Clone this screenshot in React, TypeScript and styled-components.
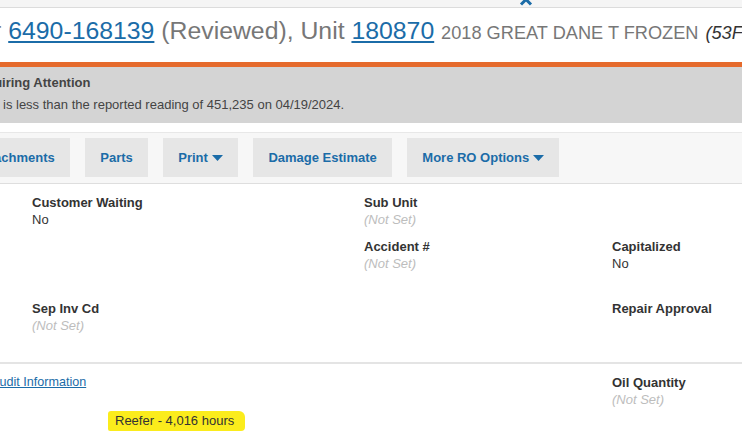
import React from "react";
import styled, { createGlobalStyle } from "styled-components";

const GlobalStyle = createGlobalStyle`
  body {
    margin: 0;
    overflow: hidden;
    background: #fff;
    font-family: "Liberation Sans", Arial, sans-serif;
    color: #333;
  }
`;

const LINK = "#1b6ca8";

const Page = styled.div`
  margin-left: -150px;
  width: 1050px;
`;

const TopStrip = styled.div`
  position: relative;
  height: 7px;
  background: #f5f5f5;
  border-bottom: 1px solid #dcdcdc;
`;

const Collapse = styled.svg`
  position: absolute;
  left: 669px;
  top: -3px;
`;

const Header = styled.h1`
  margin: 0;
  padding: 8px 0 14px 8px;
  font-size: 24.8px;
  font-weight: normal;
  line-height: 30px;
  white-space: nowrap;
  color: #777;
`;

const TitleLink = styled.a`
  color: ${LINK};
  text-decoration: underline;
`;

const Model = styled.span`
  font-size: 18.2px;
  color: #777;
`;

const Spec = styled.span`
  font-size: 18.2px;
  font-style: italic;
  color: #333;
`;

const Alert = styled.div`
  border-top: 5px solid #e56a2c;
  background: #d4d4d4;
  padding: 7px 0 10px 82px;
  font-size: 13px;
  line-height: 17px;
  color: #444;
  white-space: nowrap;
`;

const AlertTitle = styled.div`
  font-weight: bold;
  margin-bottom: 5px;
`;

const AlertMessage = styled.div`
  margin-left: 71px;
`;

const Toolbar = styled.div`
  margin-top: 9px;
  display: flex;
  gap: 15.5px;
  padding: 5px 0 6px 111px;
  background: #f7f7f7;
  border-top: 1px solid #e8e8e8;
  border-bottom: 1px solid #dedede;
`;

const ToolButton = styled.button`
  height: 39px;
  padding: 0 15px;
  border: none;
  background: #e6e6e6;
  color: ${LINK};
  font-family: inherit;
  font-size: 13px;
  font-weight: bold;
  white-space: nowrap;
  display: flex;
  align-items: center;
  gap: 4px;
`;

const Caret = styled.svg`
  margin-top: 1px;
`;

const FieldGrid = styled.div`
  display: grid;
  grid-template-columns: 332px 248px 200px;
  grid-template-rows: 44px 62px 34px;
  padding: 10px 0 28px 182px;
  border-bottom: 2px solid #e4e4e4;
`;

const FieldBox = styled.div<{ $row: number; $col: number }>`
  grid-row: ${(p) => p.$row};
  grid-column: ${(p) => p.$col};
  font-size: 13px;
  line-height: 17px;
`;

const Label = styled.div`
  font-weight: bold;
  color: #333;
`;

const Value = styled.div<{ $empty?: boolean }>`
  color: ${(p) => (p.$empty ? "#bdbdbd" : "#333")};
  font-style: ${(p) => (p.$empty ? "italic" : "normal")};
`;

const Lower = styled.div`
  display: flex;
  padding-top: 10px;
`;

const LeftColumn = styled.div`
  box-sizing: border-box;
  flex: 0 0 762px;
  padding-left: 141px;
`;

const AuditLink = styled.a`
  display: block;
  color: ${LINK};
  font-size: 12.6px;
  line-height: 16px;
  text-decoration: underline;
`;

const Highlight = styled.span`
  display: inline-block;
  margin: 21px 0 0 117px;
  padding: 1px 11px 2px 7px;
  background: #fbec1c;
  border-radius: 3px 6px 4px 2px;
  font-size: 13px;
  line-height: 17px;
  color: #333;
`;

type FieldProps = { label: string; value?: string; row: number; col: number };

const Field = ({ label, value, row, col }: FieldProps) => (
  <FieldBox $row={row} $col={col}>
    <Label>{label}</Label>
    {value !== undefined && <Value $empty={value === ""}>{value || "(Not Set)"}</Value>}
  </FieldBox>
);

const DownCaret = () => (
  <Caret width="11" height="6" viewBox="0 0 11 6">
    <path d="M0 0 H11 L5.5 6 Z" fill={LINK} />
  </Caret>
);

const buttons: { text: string; menu?: boolean }[] = [
  { text: "Attachments" },
  { text: "Parts" },
  { text: "Print", menu: true },
  { text: "Damage Estimate" },
  { text: "More RO Options", menu: true },
];

export default function App() {
  return (
    <Page>
      <GlobalStyle />
      <TopStrip>
        <Collapse width="14" height="9" viewBox="0 0 14 9">
          <path d="M2 7.5 L7 2.5 L12 7.5" fill="none" stroke={LINK} strokeWidth="3" />
        </Collapse>
      </TopStrip>
      <Header>
        Repair Order <TitleLink>6490-168139</TitleLink> (Reviewed), Unit{" "}
        <TitleLink>180870</TitleLink> <Model>2018 GREAT DANE T FROZEN</Model>{" "}
        <Spec>(53FT REEFER)</Spec>
      </Header>
      <Alert>
        <AlertTitle>Items Requiring Attention</AlertTitle>
        <AlertMessage>is less than the reported reading of 451,235 on 04/19/2024.</AlertMessage>
      </Alert>
      <Toolbar>
        {buttons.map((b) => (
          <ToolButton key={b.text}>
            {b.text}
            {b.menu && <DownCaret />}
          </ToolButton>
        ))}
      </Toolbar>
      <FieldGrid>
        <Field label="Customer Waiting" value="No" row={1} col={1} />
        <Field label="Sub Unit" value="" row={1} col={2} />
        <Field label="Accident #" value="" row={2} col={2} />
        <Field label="Capitalized" value="No" row={2} col={3} />
        <Field label="Sep Inv Cd" value="" row={3} col={1} />
        <Field label="Repair Approval" row={3} col={3} />
      </FieldGrid>
      <Lower>
        <LeftColumn>
          <AuditLink>Audit Information</AuditLink>
          <Highlight>Reefer - 4,016 hours</Highlight>
        </LeftColumn>
        <FieldBox $row={1} $col={1}>
          <Label>Oil Quantity</Label>
          <Value $empty>(Not Set)</Value>
        </FieldBox>
      </Lower>
    </Page>
  );
}
